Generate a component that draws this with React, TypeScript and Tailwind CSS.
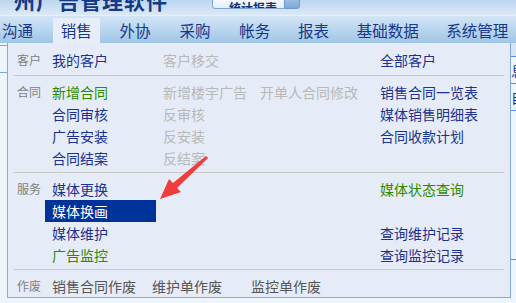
const blue = 'text-[#1b3290]'
const green = 'text-[#2e8b00]'
const off = 'text-[#b8b8b8]'

type Cell = { text: string; tone?: 'blue' | 'green' | 'off' | 'active' }

const toneClass = (tone: Cell['tone']) => {
  if (tone === 'green') return green
  if (tone === 'off') return off
  if (tone === 'active') return 'bg-[#003399] text-white'
  return blue
}

const menus = ['沟通', '销售', '外协', '采购', '帐务', '报表', '基础数据', '系统管理']
const menuX = ['pl-[2px] w-[53px]', 'w-[47px] justify-center', 'w-[80px] pl-[20px]', 'w-[60px]', 'w-[59px]', 'w-[59px]', 'w-[90px]', 'w-[70px]']

const rows: { label?: string; cells: (Cell | null)[]; sep?: boolean }[] = [
  { label: '客户', cells: [{ text: '我的客户' }, { text: '客户移交', tone: 'off' }, null, { text: '全部客户' }], sep: true },
  { label: '合同', cells: [{ text: '新增合同', tone: 'green' }, { text: '新增楼宇广告', tone: 'off' }, { text: '开单人合同修改', tone: 'off' }, { text: '销售合同一览表' }] },
  { cells: [{ text: '合同审核' }, { text: '反审核', tone: 'off' }, null, { text: '媒体销售明细表' }] },
  { cells: [{ text: '广告安装' }, { text: '反安装', tone: 'off' }, null, { text: '合同收款计划' }] },
  { cells: [{ text: '合同结案' }, { text: '反结案', tone: 'off' }, null, null], sep: true },
  { label: '服务', cells: [{ text: '媒体更换' }, null, null, { text: '媒体状态查询', tone: 'green' }] },
  { cells: [{ text: '媒体换画', tone: 'active' }, null, null, null] },
  { cells: [{ text: '媒体维护' }, null, null, { text: '查询维护记录' }] },
  { cells: [{ text: '广告监控', tone: 'green' }, null, null, { text: '查询监控记录' }], sep: true },
]

const cellW = ['w-[111px]', 'w-[97px]', 'w-[120px]', 'flex-1']

export default function App() {
  return (
    <div className="relative w-[516px] h-[303px] overflow-hidden bg-[#eef6fd] font-['Noto_Sans_CJK_SC',sans-serif]">
      {/* title strip, mostly scrolled off the top */}
      <div className="h-[15px] overflow-hidden bg-gradient-to-b from-[#bcd6ef] to-[#dbe9f7] flex items-end">
        <div className="-ml-[8px] text-[21px] leading-[22px] mb-[4px] font-bold tracking-[1px] text-[#163a86] w-[208px] shrink-0">广州广告管理软件</div>
        <div className="ml-[12px] mb-[6px] w-[74px] h-[14px] rounded-[3px] border border-[#7fa5d4] bg-gradient-to-b from-white to-[#e4eefa] text-[12px] leading-[12px] font-bold text-[#14306f] pl-[16px] overflow-hidden flex items-end shrink-0">
          <span className="mb-[-6px]">统计报表</span>
        </div>
        <div className="mb-[6px] -ml-[2px] w-[16px] h-[14px] rounded-r-[3px] bg-gradient-to-b from-[#a7c8ea] to-[#7ea9d8] border border-[#6f9bd0] shrink-0" />
      </div>

      {/* menu bar */}
      <div className="h-[28px] flex items-end border-t border-[#e6f0fa] bg-gradient-to-b from-[#d3e5f6] to-[#9fc6e7]">
        {menus.map((m, i) => (
          <div
            key={m}
            className={`h-[25px] flex items-center text-[15.5px] text-[#17368a] ${menuX[i]} ${i === 1 ? 'bg-[#e7eef9]' : ''}`}
          >
            {m}
          </div>
        ))}
      </div>

      <div className="flex h-[260px]">
        <div className="w-[7px] flex flex-col">
          <div className="mt-[2px] h-px bg-[#7ea7da]" />
          <div className="mt-[26px] h-px bg-[#7ea7da]" />
        </div>

        {/* dropdown panel */}
        <div className="w-[504px] h-[255px] bg-[#e6ecf7] border-x border-b border-[#86a9dc] pt-[6px] text-[14px]">
          {rows.map((r, i) => (
            <div key={i}>
              <div className="h-[22px] flex items-center">
                <div className="w-[37px] pl-[9px] text-[12px] text-[#808080]">{r.label}</div>
                {r.cells.map((c, j) => (
                  <div key={j} className={`${cellW[j]} h-[22px] flex items-center pl-[7px] ${c ? toneClass(c.tone) : ''}`}>
                    {c?.text}
                  </div>
                ))}
              </div>
              {r.sep && <div className={`${i === 0 ? 'mt-[4px]' : 'mt-[3px]'} mb-[5px] mx-[6px] h-px bg-[#c8c8c8]`} />}
            </div>
          ))}
          <div className="h-[22px] flex items-center text-[#555]">
            <div className="w-[37px] pl-[9px] text-[12px] text-[#808080]">作废</div>
            <div className="w-[100px] pl-[7px]">销售合同作废</div>
            <div className="w-[99px] pl-[7px]">维护单作废</div>
            <div className="pl-[7px]">监控单作废</div>
          </div>
        </div>

        <div className="w-[5px] flex flex-col bg-[#eef6fd]">
          <div className="h-[13px] bg-[#d4e4f5]" />
          <div className="h-px bg-[#5d8fd4]" />
          <div className="h-[26px] text-[14px] leading-[26px] text-[#1b3290] overflow-hidden">息</div>
          <div className="h-px bg-[#5d8fd4]" />
          <div className="h-[26px] text-[14px] leading-[26px] text-[#1b3290] overflow-hidden">自</div>
          <div className="h-px bg-[#5d8fd4]" />
          <div className="mt-[148px] h-px bg-[#5d8fd4]" />
        </div>
      </div>

      {/* callout arrow */}
      <svg className="absolute left-0 top-0 pointer-events-none" width="516" height="303">
        <polygon
          points="160,199 181,192 177,188 208,158 206,156 173,183 169,179"
          fill="#f03c3c"
        />
      </svg>
    </div>
  )
}
